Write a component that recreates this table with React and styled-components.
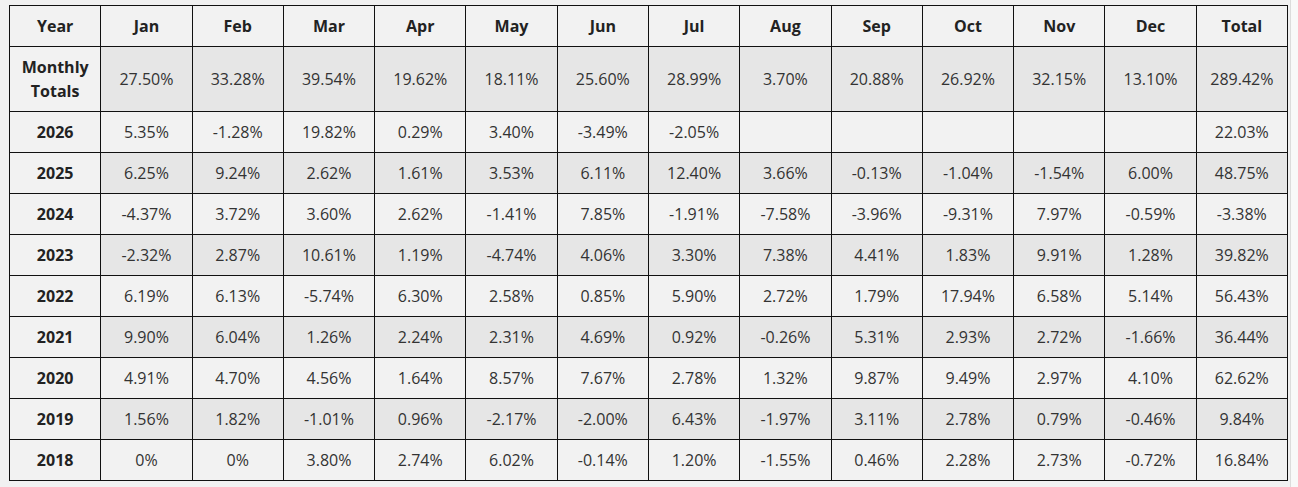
import React from "react";
import styled, { createGlobalStyle } from "styled-components";

const GlobalStyle = createGlobalStyle`
  html, body {
    margin: 0;
    padding: 0;
    background: #f8f8f8;
    font-family: "Open Sans", "DejaVu Sans", sans-serif;
  }
`;

const months = ["Jan", "Feb", "Mar", "Apr", "May", "Jun", "Jul", "Aug", "Sep", "Oct", "Nov", "Dec"];

const totals = ["27.50%", "33.28%", "39.54%", "19.62%", "18.11%", "25.60%", "28.99%", "3.70%", "20.88%", "26.92%", "32.15%", "13.10%", "289.42%"];

const rows = [
  { year: 2026, values: ["5.35%", "-1.28%", "19.82%", "0.29%", "3.40%", "-3.49%", "-2.05%", "", "", "", "", "", "22.03%"] },
  { year: 2025, values: ["6.25%", "9.24%", "2.62%", "1.61%", "3.53%", "6.11%", "12.40%", "3.66%", "-0.13%", "-1.04%", "-1.54%", "6.00%", "48.75%"] },
  { year: 2024, values: ["-4.37%", "3.72%", "3.60%", "2.62%", "-1.41%", "7.85%", "-1.91%", "-7.58%", "-3.96%", "-9.31%", "7.97%", "-0.59%", "-3.38%"] },
  { year: 2023, values: ["-2.32%", "2.87%", "10.61%", "1.19%", "-4.74%", "4.06%", "3.30%", "7.38%", "4.41%", "1.83%", "9.91%", "1.28%", "39.82%"] },
  { year: 2022, values: ["6.19%", "6.13%", "-5.74%", "6.30%", "2.58%", "0.85%", "5.90%", "2.72%", "1.79%", "17.94%", "6.58%", "5.14%", "56.43%"] },
  { year: 2021, values: ["9.90%", "6.04%", "1.26%", "2.24%", "2.31%", "4.69%", "0.92%", "-0.26%", "5.31%", "2.93%", "2.72%", "-1.66%", "36.44%"] },
  { year: 2020, values: ["4.91%", "4.70%", "4.56%", "1.64%", "8.57%", "7.67%", "2.78%", "1.32%", "9.87%", "9.49%", "2.97%", "4.10%", "62.62%"] },
  { year: 2019, values: ["1.56%", "1.82%", "-1.01%", "0.96%", "-2.17%", "-2.00%", "6.43%", "-1.97%", "3.11%", "2.78%", "0.79%", "-0.46%", "9.84%"] },
  { year: 2018, values: ["0%", "0%", "3.80%", "2.74%", "6.02%", "-0.14%", "1.20%", "-1.55%", "0.46%", "2.28%", "2.73%", "-0.72%", "16.84%"] },
];

const Panel = styled.div`
  width: 1281px;
  padding: 5px 0 7px 9px;
  background: #f1f1f1;
  border-right: 1px solid #dcdcdc;
`;

const Table = styled.table`
  width: 1279px;
  table-layout: fixed;
  border-collapse: collapse;
  font-size: 16px;
  line-height: 24px;
`;

const HeadCell = styled.th`
  border: 1px solid #111;
  padding: 8px 4px;
  text-align: center;
  font-weight: 700;
  color: #222;
  background: #f2f2f2;
`;

const Cell = styled.td`
  border: 1px solid #111;
  padding: 8px 4px;
  text-align: center;
  font-weight: 400;
  color: #333;
  background: ${({ $shaded }) => ($shaded ? "#e6e6e6" : "#f2f2f2")};
`;

const App = () => {
  return (
    <>
      <GlobalStyle />
      <Panel>
        <Table>
          <thead>
            <tr>
              <HeadCell>Year</HeadCell>
              {months.map((m) => (
                <HeadCell key={m}>{m}</HeadCell>
              ))}
              <HeadCell>Total</HeadCell>
            </tr>
          </thead>
          <tbody>
            <tr>
              <HeadCell>
                Monthly
                <br />
                Totals
              </HeadCell>
              {totals.map((v, i) => (
                <Cell key={i} $shaded>
                  {v}
                </Cell>
              ))}
            </tr>
            {rows.map((row, r) => (
              <tr key={row.year}>
                <HeadCell>{row.year}</HeadCell>
                {row.values.map((v, i) => (
                  <Cell key={i} $shaded={r % 2 === 1}>
                    {v}
                  </Cell>
                ))}
              </tr>
            ))}
          </tbody>
        </Table>
      </Panel>
    </>
  );
};

export default App;
